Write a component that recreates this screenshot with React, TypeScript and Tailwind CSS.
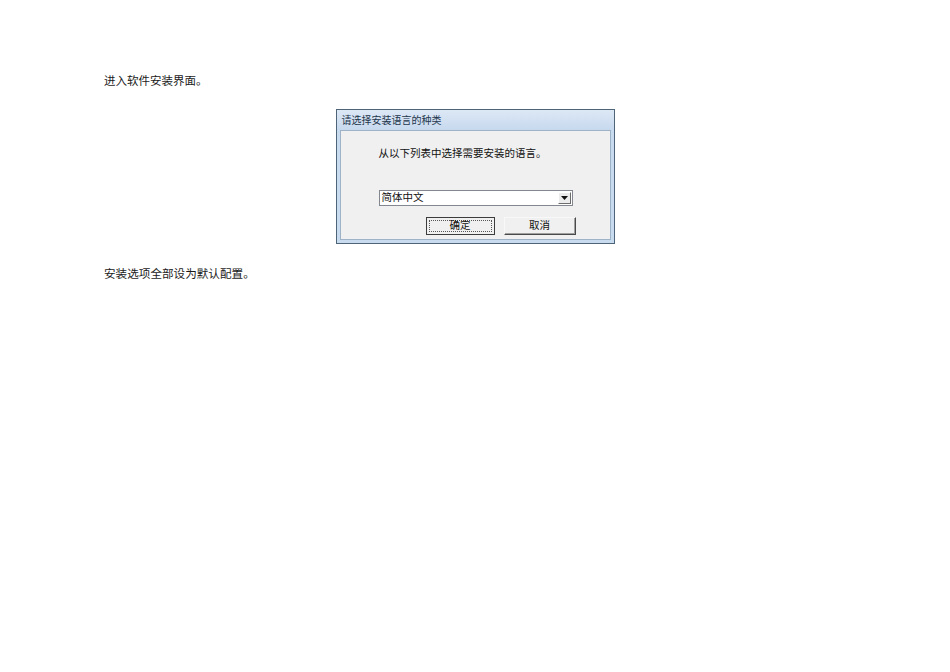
import React from "react";

const cjk = { fontFamily: '"Noto Sans CJK SC", "Noto Sans", sans-serif' };

function ComboBox() {
  return (
    <div className="flex h-[16px] w-[194px] items-stretch border border-[#828790] bg-white">
      <div className="flex flex-1 items-center pl-[2px] text-[10.5px] leading-none text-[#111]">简体中文</div>
      <div className="my-[1px] mr-[1px] flex w-[13px] items-center justify-center border border-t-white border-l-white border-r-[#6d6d6d] border-b-[#6d6d6d] bg-[#ececec]">
        <svg width="7" height="4" viewBox="0 0 7 4">
          <path d="M0 0 H7 L3.5 4 Z" fill="#111" />
        </svg>
      </div>
    </div>
  );
}

function Dialog() {
  return (
    <div className="flex h-[135px] w-[279px] flex-col border border-[#4d6479] bg-[#c9dbef]" style={cjk}>
      {/* caption */}
      <div className="flex h-[20px] items-center bg-gradient-to-b from-[#dde8f5] to-[#c7d9ee] pl-[5px] text-[10px] leading-none text-[#23364d]">
        请选择安装语言的种类
      </div>
      {/* client area inside the frame */}
      <div className="mx-[3px] mb-[3px] flex flex-1 flex-col border border-[#9fb3c8] bg-[#f0f0f0] pl-[38px]">
        <div className="mt-[17px] text-[10.5px] leading-none text-[#111]">从以下列表中选择需要安装的语言。</div>
        <div className="mt-[31px]">
          <ComboBox />
        </div>
        <div className="mt-[11px] flex gap-[9px] pl-[47px]">
          <div className="flex h-[18px] w-[69px] items-center justify-center border border-[#3c3c3c] bg-[#f0f0f0] p-[2px]">
            <div className="flex h-full w-full items-center justify-center border border-dotted border-[#555] text-[10.5px] leading-none text-[#111]">
              确定
            </div>
          </div>
          <div className="flex h-[18px] w-[72px] items-center justify-center border border-t-[#f8f8f8] border-l-[#f8f8f8] border-r-[#4a4a4a] border-b-[#4a4a4a] bg-[#f0f0f0] text-[10.5px] leading-none text-[#111] shadow-[inset_-1px_-1px_0_#a0a0a0]">
            取消
          </div>
        </div>
      </div>
    </div>
  );
}

export default function App() {
  return (
    <div className="flex h-[672px] w-[950px] flex-col bg-white pt-[73px]" style={cjk}>
      <p className="ml-[104px] text-[11.5px] leading-[14px] text-[#1a1a1a]">进入软件安装界面。</p>
      <div className="mt-[22px] flex justify-center">
        <Dialog />
      </div>
      <p className="ml-[104px] mt-[22px] text-[11.6px] leading-[14px] text-[#1a1a1a]">安装选项全部设为默认配置。</p>
    </div>
  );
}
